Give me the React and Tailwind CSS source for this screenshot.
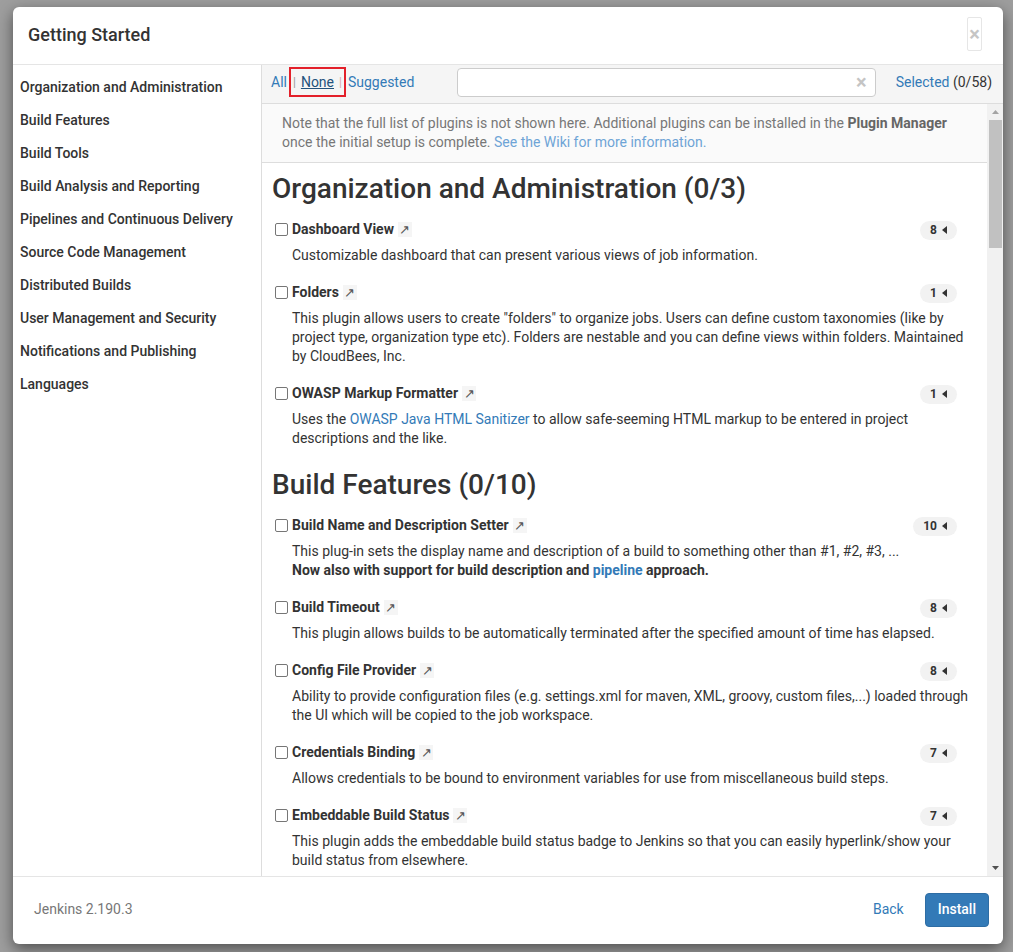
import React from "react";

const categories = [
  "Organization and Administration",
  "Build Features",
  "Build Tools",
  "Build Analysis and Reporting",
  "Pipelines and Continuous Delivery",
  "Source Code Management",
  "Distributed Builds",
  "User Management and Security",
  "Notifications and Publishing",
  "Languages",
];

function Badge({ n }) {
  return (
    <span className="inline-flex items-center h-[19px] rounded-full bg-[#f2f2f2] px-[10px] gap-[5px] text-[12px] font-bold text-[#333]">
      {n}
      <svg width="5" height="8" viewBox="0 0 5 8">
        <path d="M5 0 L0 4 L5 8 Z" fill="#333" />
      </svg>
    </span>
  );
}

function Plugin({ name, count, children }) {
  return (
    <div className="mb-[17px]">
      <div className="flex items-center h-[20px] pr-[30px]">
        <span className="ml-[3px] w-[13px] h-[13px] border border-[#767676] rounded-[2px] bg-white shrink-0" />
        <span className="ml-[4px] text-[14px] font-bold text-[#333] leading-[20px]">{name}</span>
        <span className="ml-[4px] inline-flex items-center justify-center w-[14px] h-[15px] bg-[#f5f5f5] text-[#555] text-[13px] leading-none">
          ↗
        </span>
        <span className="ml-auto">
          <Badge n={count} />
        </span>
      </div>
      <div className="mt-[7px] pl-[20px] pr-[11px] text-[14px] leading-[19px] text-[#333]">{children}</div>
    </div>
  );
}

function Heading({ children, first }) {
  return (
    <h2
      className={
        (first ? "mt-[9px]" : "mt-[20px]") +
        " mb-[13px] text-[28px] leading-[34px] font-medium text-[#333]"
      }
    >
      {children}
    </h2>
  );
}

export default function App() {
  return (
    <div className="w-full h-screen bg-[#9e9e9e] pt-[7px] pl-[13px] font-['Roboto','Liberation_Sans',sans-serif] overflow-hidden">
      <div className="w-[990px] h-[937px] bg-white rounded-[6px] shadow-[0_5px_15px_rgba(0,0,0,0.5)] flex flex-col overflow-hidden">
        {/* Header */}
        <div className="h-[58px] shrink-0 border-b border-[#e5e5e5] flex items-center pl-[15px] pr-[21px]">
          <div className="text-[18px] font-medium text-[#333] -mt-[3px]">Getting Started</div>
          <div className="ml-auto mt-[-3px] w-[15px] h-[34px] border border-[#e6e6e6] rounded-[2px] flex items-center justify-center text-[#c5c5c5] text-[20px] font-bold leading-none">
            ×
          </div>
        </div>

        {/* Body */}
        <div className="flex-1 min-h-0 flex">
          {/* Sidebar */}
          <div className="w-[249px] shrink-0 border-r border-[#dddddd] bg-white pt-[6px] pl-[7px]">
            {categories.map((c) => (
              <div key={c} className="h-[33px] leading-[33px] text-[14px] font-medium text-[#333]">
                {c}
              </div>
            ))}
          </div>

          {/* Right pane */}
          <div className="flex-1 min-w-0 flex flex-col">
            {/* Filter bar */}
            <div className="h-[39px] shrink-0 bg-[#f5f5f5] border-b border-[#dddddd] flex items-center pb-[4px] pl-[9px] pr-[11px] text-[14px]">
              <span className="text-[#337ab7]">All</span>
              <span className="ml-[2px] inline-flex items-center h-[30px] border-2 border-[#e3202a] px-[2px]">
                <span className="text-[#999] text-[12px]">|</span>
                <span className="ml-[5px] text-[#23527c] underline">None</span>
                <span className="ml-[5px] text-[#d6a5ad] text-[12px]">|</span>
              </span>
              <span className="ml-[2px] text-[#337ab7]">Suggested</span>
              <div className="ml-auto w-[419px] h-[29px] bg-white border border-[#cccccc] rounded-[4px] flex items-center justify-end pr-[8px]">
                <span className="text-[#c4c4c4] text-[20px] font-bold leading-none">×</span>
              </div>
              <div className="ml-[20px]">
                <span className="text-[#337ab7]">Selected</span>{" "}
                <span className="text-[#333]">(0/58)</span>
              </div>
            </div>

            {/* Scroll area */}
            <div className="flex-1 min-h-0 flex">
              <div className="flex-1 min-w-0 overflow-hidden">
                <div className="bg-[#fafafa] border-b border-[#dddddd] pt-[10px] pb-[10px] pl-[20px] pr-[20px] text-[14px] leading-[19px] text-[#777]">
                  Note that the full list of plugins is not shown here. Additional plugins can be installed in the{" "}
                  <b className="font-bold text-[#666]">Plugin Manager</b> once the initial setup is complete.{" "}
                  <span className="text-[#6ea4d6]">See the Wiki for more information.</span>
                </div>
                <div className="pl-[10px]">
                  <Heading first>Organization and Administration (0/3)</Heading>
                  <Plugin name="Dashboard View" count="8">
                    Customizable dashboard that can present various views of job information.
                  </Plugin>
                  <Plugin name="Folders" count="1">
                    This plugin allows users to create "folders" to organize jobs. Users can define custom taxonomies (like by
                    project type, organization type etc). Folders are nestable and you can define views within folders. Maintained
                    by CloudBees, Inc.
                  </Plugin>
                  <Plugin name="OWASP Markup Formatter" count="1">
                    Uses the <span className="text-[#337ab7]">OWASP Java HTML Sanitizer</span> to allow safe-seeming HTML markup
                    to be entered in project descriptions and the like.
                  </Plugin>
                  <Heading>Build Features (0/10)</Heading>
                  <Plugin name="Build Name and Description Setter" count="10">
                    This plug-in sets the display name and description of a build to something other than #1, #2, #3, ...
                    <br />
                    <b className="font-bold">
                      Now also with support for build description and{" "}
                      <span className="text-[#337ab7]">pipeline</span> approach.
                    </b>
                  </Plugin>
                  <Plugin name="Build Timeout" count="8">
                    This plugin allows builds to be automatically terminated after the specified amount of time has elapsed.
                  </Plugin>
                  <Plugin name="Config File Provider" count="8">
                    Ability to provide configuration files (e.g. settings.xml for maven, XML, groovy, custom files,...) loaded
                    through the UI which will be copied to the job workspace.
                  </Plugin>
                  <Plugin name="Credentials Binding" count="7">
                    Allows credentials to be bound to environment variables for use from miscellaneous build steps.
                  </Plugin>
                  <Plugin name="Embeddable Build Status" count="7">
                    This plugin adds the embeddable build status badge to Jenkins so that you can easily hyperlink/show your
                    build status from elsewhere.
                  </Plugin>
                  <Plugin name="Rebuilder" count="3">
                    This plug-in allows the user to rebuild a parameterized build without entering the parameters again.
                  </Plugin>
                </div>
              </div>

              {/* Fake scrollbar */}
              <div className="w-[16px] shrink-0 bg-[#f1f1f1] flex flex-col items-center">
                <div className="h-[16px] flex items-center justify-center">
                  <svg width="7" height="4" viewBox="0 0 7 4">
                    <path d="M0 4 L3.5 0 L7 4 Z" fill="#a3a3a3" />
                  </svg>
                </div>
                <div className="w-[13px] h-[128px] bg-[#c1c1c1]" />
                <div className="flex-1" />
                <div className="h-[16px] flex items-center justify-center">
                  <svg width="7" height="4" viewBox="0 0 7 4">
                    <path d="M0 0 L7 0 L3.5 4 Z" fill="#505050" />
                  </svg>
                </div>
              </div>
            </div>
          </div>
        </div>

        {/* Footer */}
        <div className="h-[68px] shrink-0 border-t border-[#e5e5e5] flex items-center pb-[2px] pl-[21px] pr-[14px]">
          <span className="text-[14px] text-[#777]">Jenkins 2.190.3</span>
          <span className="ml-auto text-[14px] text-[#337ab7]">Back</span>
          <button className="ml-[21px] h-[34px] px-[12px] rounded-[4px] bg-[#337ab7] border border-[#2e6da4] text-white text-[14px] font-medium">
            Install
          </button>
        </div>
      </div>
    </div>
  );
}
